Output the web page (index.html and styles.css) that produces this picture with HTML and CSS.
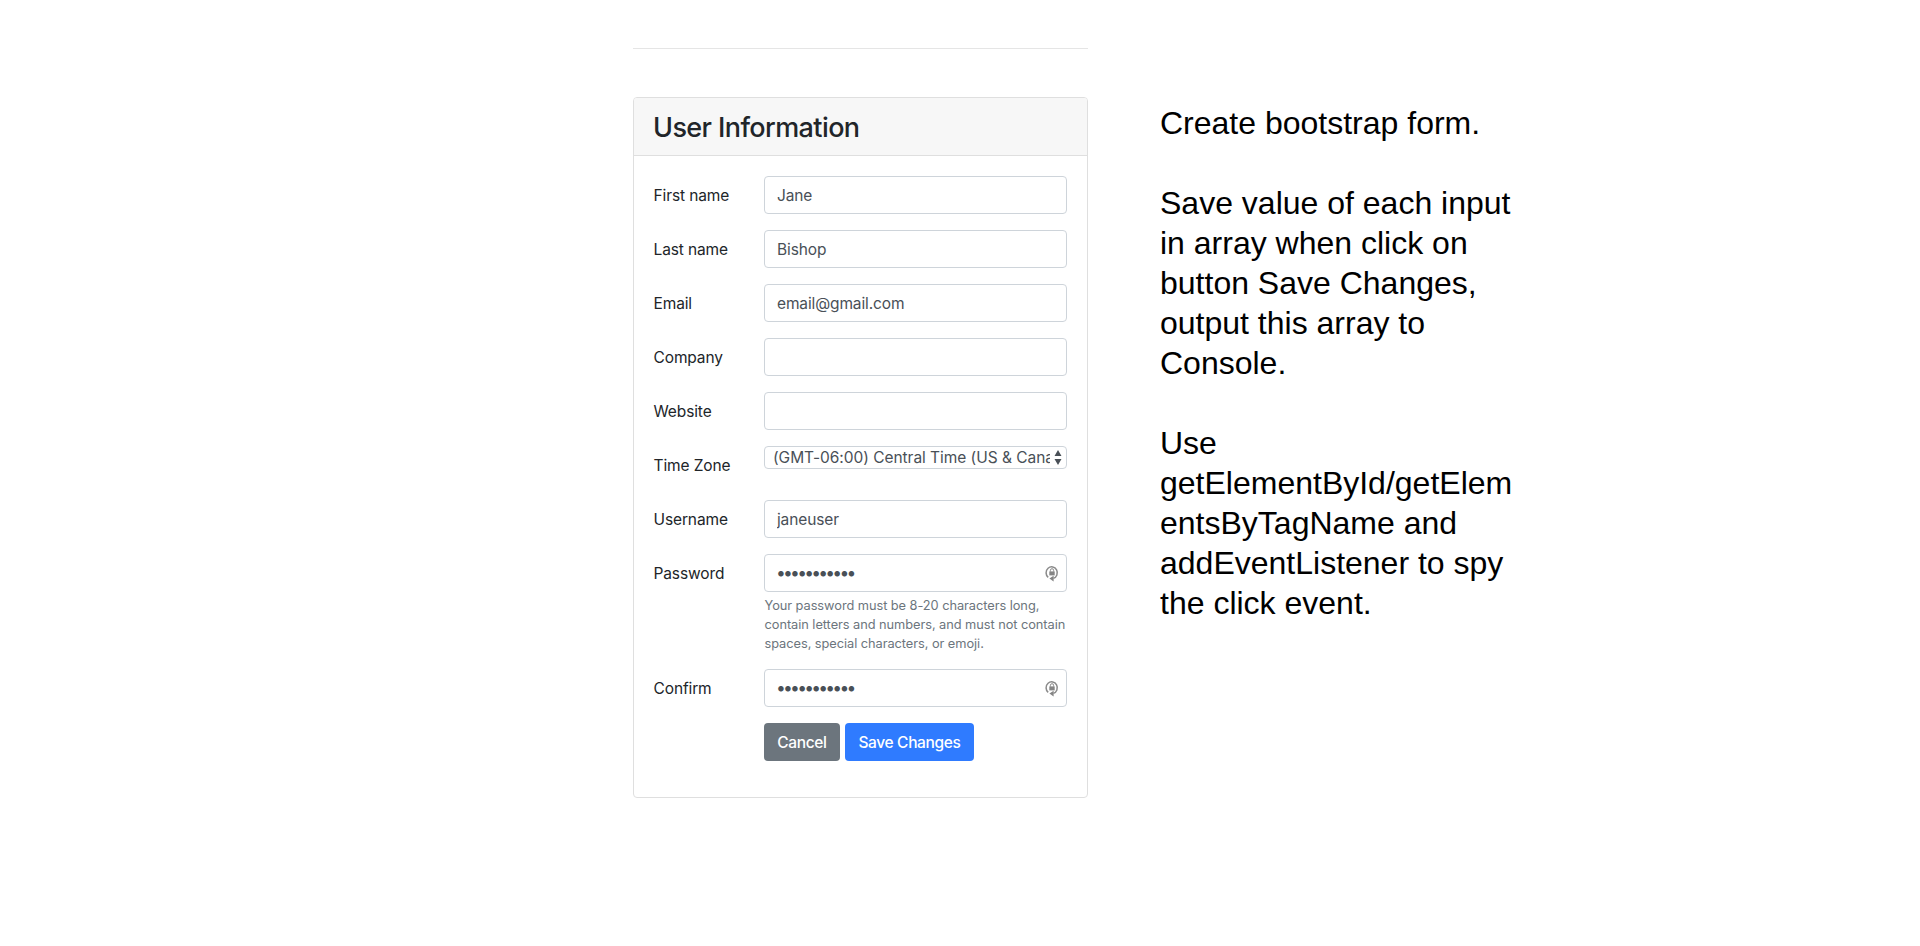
FILE: index.html
```html
<!DOCTYPE html>
<html lang="en">
<head>
<meta charset="utf-8">
<title>User Information</title>
<link rel="stylesheet" href="styles.css">
</head>
<body>
<svg class="sprite" aria-hidden="true">
  <symbol id="lock" viewBox="0 0 14 17">
    <path d="M3.2 12.4A5.6 5.9 0 1 1 8.4 13.4" fill="none" stroke="#8b8b8b" stroke-width="1.5"/>
    <path d="M8.6 10.8v5.6L4.4 13.6z" fill="#858585"/>
    <rect x="4.3" y="6.4" width="5.4" height="4" fill="#858585"/>
    <path d="M5.4 6.6V5.3a1.6 1.6 0 0 1 3.2 0v1.3" fill="none" stroke="#8b8b8b" stroke-width="1"/>
  </symbol>
</svg>
<main class="page">
  <section class="form-column">
    <hr class="divider">
    <div class="card">
      <header class="card-header"><h3 class="title">User Information</h3></header>
      <form class="card-body">
        <div class="row"><label class="label" for="first">First name</label><input class="control" id="first" type="text" value="Jane"></div>
        <div class="row"><label class="label" for="last">Last name</label><input class="control" id="last" type="text" value="Bishop"></div>
        <div class="row"><label class="label" for="email">Email</label><input class="control" id="email" type="text" value="email@gmail.com"></div>
        <div class="row"><label class="label" for="company">Company</label><input class="control" id="company" type="text"></div>
        <div class="row"><label class="label" for="site">Website</label><input class="control" id="site" type="text"></div>
        <div class="row"><span class="label">Time Zone</span>
          <div class="select"><span class="select-text">(GMT-06:00) Central Time (US &amp; Canada)</span><svg class="arrows" viewBox="0 0 8 15"><path d="M4 0l3.5 6h-7zM4 15l3.5-6h-7z"/></svg></div>
        </div>
        <div class="row"><label class="label" for="user">Username</label><input class="control" id="user" type="text" value="janeuser"></div>
        <div class="row"><span class="label">Password</span>
          <div class="field">
            <div class="control secret"><span class="dots">•••••••••••</span><svg class="lock"><use href="#lock"/></svg></div>
            <small class="help">Your password must be 8-20 characters long,<br>contain letters and numbers, and must not contain<br>spaces, special characters, or emoji.</small>
          </div>
        </div>
        <div class="row"><span class="label">Confirm</span>
          <div class="control secret"><span class="dots">•••••••••••</span><svg class="lock"><use href="#lock"/></svg></div>
        </div>
        <div class="row"><span class="label"></span>
          <div class="actions"><button class="btn cancel" type="reset">Cancel</button><button class="btn save" type="button">Save Changes</button></div>
        </div>
      </form>
    </div>
  </section>
  <aside class="notes">
    <p>Create bootstrap form.</p>
    <p>Save value of each input<br>in array when click on<br>button Save Changes,<br>output this array to<br>Console.</p>
    <p>Use<br>getElementById/getElem<br>entsByTagName and<br>addEventListener to spy<br>the click event.</p>
  </aside>
</main>
</body>
</html>
```
FILE: styles.css
```css
* { box-sizing: border-box; }
body {
  margin: 0;
  background: #fff;
  color: #212529;
  font: 400 15.5px/24px Inter, "Liberation Sans", sans-serif;
}
.sprite { display: none; }
.page { display: flex; align-items: flex-start; padding: 48px 0 0 633px; }
.form-column { width: 455px; }
.divider { margin: 0 0 48px; border: 0; border-top: 1px solid #e5e5e5; }
.card { height: 701px; border: 1px solid #dfdfdf; border-radius: 4px; background: #fff; }
.card-header {
  height: 58px;
  padding: 12px 19px;
  border-bottom: 1px solid #dfdfdf;
  border-radius: 3px 3px 0 0;
  background: #f7f7f7;
}
.title { margin: 0; font-size: 27px; line-height: 35px; font-weight: 500; letter-spacing: -0.6px; }
.card-body { padding: 20px 20px 0; }
.row { display: flex; align-items: flex-start; min-height: 38px; margin-bottom: 16px; }
.label { width: 110px; flex: none; padding-top: 8px; letter-spacing: -0.12px; text-indent: -0.5px; }
.control {
  flex: none;
  width: 303px;
  height: 38px;
  padding: 6px 12px;
  border: 1px solid #ced4da;
  border-radius: 4px;
  background: #fff;
  color: #495057;
  font: inherit;
  letter-spacing: -0.13px;
}
.select {
  display: flex;
  align-items: center;
  width: 303px;
  height: 23px;
  padding: 0 3px 0 8px;
  border: 1px solid #ced4da;
  border-radius: 4px;
  color: #495057;
  line-height: 21px;
}
.select-text { width: 277px; overflow: hidden; white-space: nowrap; letter-spacing: -0.04px; }
.arrows { width: 8px; height: 15px; margin-left: 4px; flex: none; fill: #495057; }
.field { width: 303px; }
.secret { display: flex; align-items: center; justify-content: space-between; padding-right: 7px; }
.dots { margin-left: -1px; font-size: 17.5px; letter-spacing: -2.8px; }
.lock { width: 14px; height: 17px; }
.help { display: block; margin: 4px 0 16px; padding-left: 0.5px; color: #6c757d; font-size: 12.8px; line-height: 19px; letter-spacing: -0.05px; white-space: nowrap; }
.row:has(.help) { margin-bottom: 0; }
.actions { display: flex; gap: 5px; }
.btn { height: 38px; padding: 2px 0 0; border: 0; border-radius: 4px; color: #fff; font: 500 15.5px/24px Inter, "Liberation Sans", sans-serif; letter-spacing: -0.35px; }
.cancel { width: 76px; background: #6c757d; }
.save { width: 129px; background: #2f7bff; }
.notes { margin: 55px 0 0 72px; width: 360px; color: #000; font: 32px/40px "Liberation Sans", sans-serif; }
.notes p { margin: 0 0 40px; white-space: nowrap; }
```
